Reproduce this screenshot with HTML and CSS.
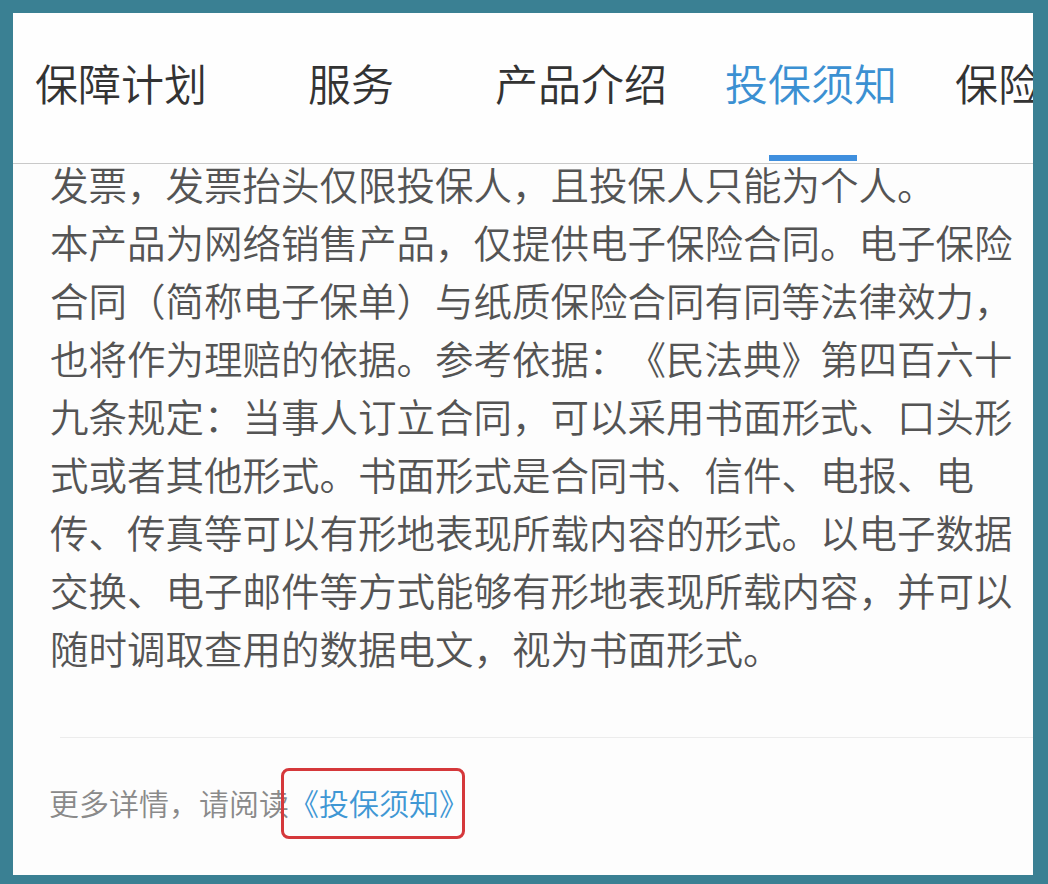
FILE: index.html
```html
<!DOCTYPE html>
<html lang="zh-CN">
<head>
<meta charset="utf-8">
<title>投保须知</title>
<link rel="stylesheet" href="styles.css">
</head>
<body>
<div class="panel">
  <div class="header">
    <div class="tabs">
      <div class="tab"><span class="tab-label">保障计划</span></div>
      <div class="tab"><span class="tab-label">服务</span></div>
      <div class="tab"><span class="tab-label">产品介绍</span></div>
      <div class="tab active"><span class="tab-label">投保须知</span></div>
      <div class="tab"><span class="tab-label">保险条款</span></div>
    </div>
  </div>
  <div class="content">
    <div class="article">
      <p class="para">发票，发票抬头仅限投保人，且投保人只能为个人。</p>
      <p class="para">本产品为网络销售产品，仅提供电子保险合同。电子保险合同（简称电子保单）与纸质保险合同有同等法律效力，也将作为理赔的依据。参考依据：《民法典》第四百六十九条规定：当事人订立合同，可以采用书面形式、口头形式或者其他形式。书面形式是合同书、信件、电报、电传、传真等可以有形地表现所载内容的形式。以电子数据交换、电子邮件等方式能够有形地表现所载内容，并可以随时调取查用的数据电文，视为书面形式。</p>
    </div>
  </div>
  <div class="divider"></div>
  <div class="footer">
    <span class="more">更多详情，请阅读</span><span class="link">《投保须知》</span>
  </div>
</div>
</body>
</html>
```

FILE: styles.css
```css
html, body {
  margin: 0;
  padding: 0;
}
body {
  background: #3a8093;
  width: 1048px;
  height: 884px;
  overflow: hidden;
  font-family: "Noto Sans CJK SC", "Noto Sans", sans-serif;
}
.panel {
  margin: 13px 15px 9px 13px;
  width: 1020px;
  height: 862px;
  background: #fdfdfd;
  overflow: hidden;
  display: flex;
  flex-direction: column;
}
.header {
  height: 150px;
  flex-shrink: 0;
  border-bottom: 1px solid #c9c9c9;
  background: #fefefe;
  overflow: hidden;
}
.tabs {
  display: flex;
  margin-left: -7px;
}
.tab {
  width: 230px;
  flex-shrink: 0;
  height: 150px;
  padding-top: 48px;
  box-sizing: border-box;
  display: flex;
  flex-direction: column;
  align-items: center;
  color: #333333;
  font-size: 43px;
  font-weight: 350;
}
.tab-label {
  line-height: 43px;
  white-space: nowrap;
}
.tab.active {
  color: #3b90d2;
}
.tab.active::after {
  content: "";
  display: block;
  width: 88px;
  height: 6px;
  margin-top: 51px;
  margin-left: 3px;
  background: #3f8fde;
}
.content {
  height: 573px;
  flex-shrink: 0;
  overflow: hidden;
}
.article {
  margin-top: -10px;
  padding-left: 37px;
  width: calc(25 * 38.5px + 2px);
  font-size: 38.5px;
  font-weight: 350;
  line-height: 58px;
  color: #545454;
  text-spacing-trim: space-all;
}
.para {
  margin: 0;
}
.divider {
  flex-shrink: 0;
  height: 1px;
  margin-left: 47px;
  background: #ececec;
}
.footer {
  padding: 44px 0 0 36px;
  font-size: 30px;
  font-weight: 350;
  line-height: 40px;
  white-space: nowrap;
  text-spacing-trim: space-all;
}
.more {
  color: #8a8a8a;
}
.link {
  position: relative;
  color: #3f97d4;
}
.link::after {
  content: "";
  position: absolute;
  left: -8px;
  right: 4px;
  top: -12px;
  bottom: -15px;
  border: 3px solid #d5383b;
  border-radius: 8px;
}
```
